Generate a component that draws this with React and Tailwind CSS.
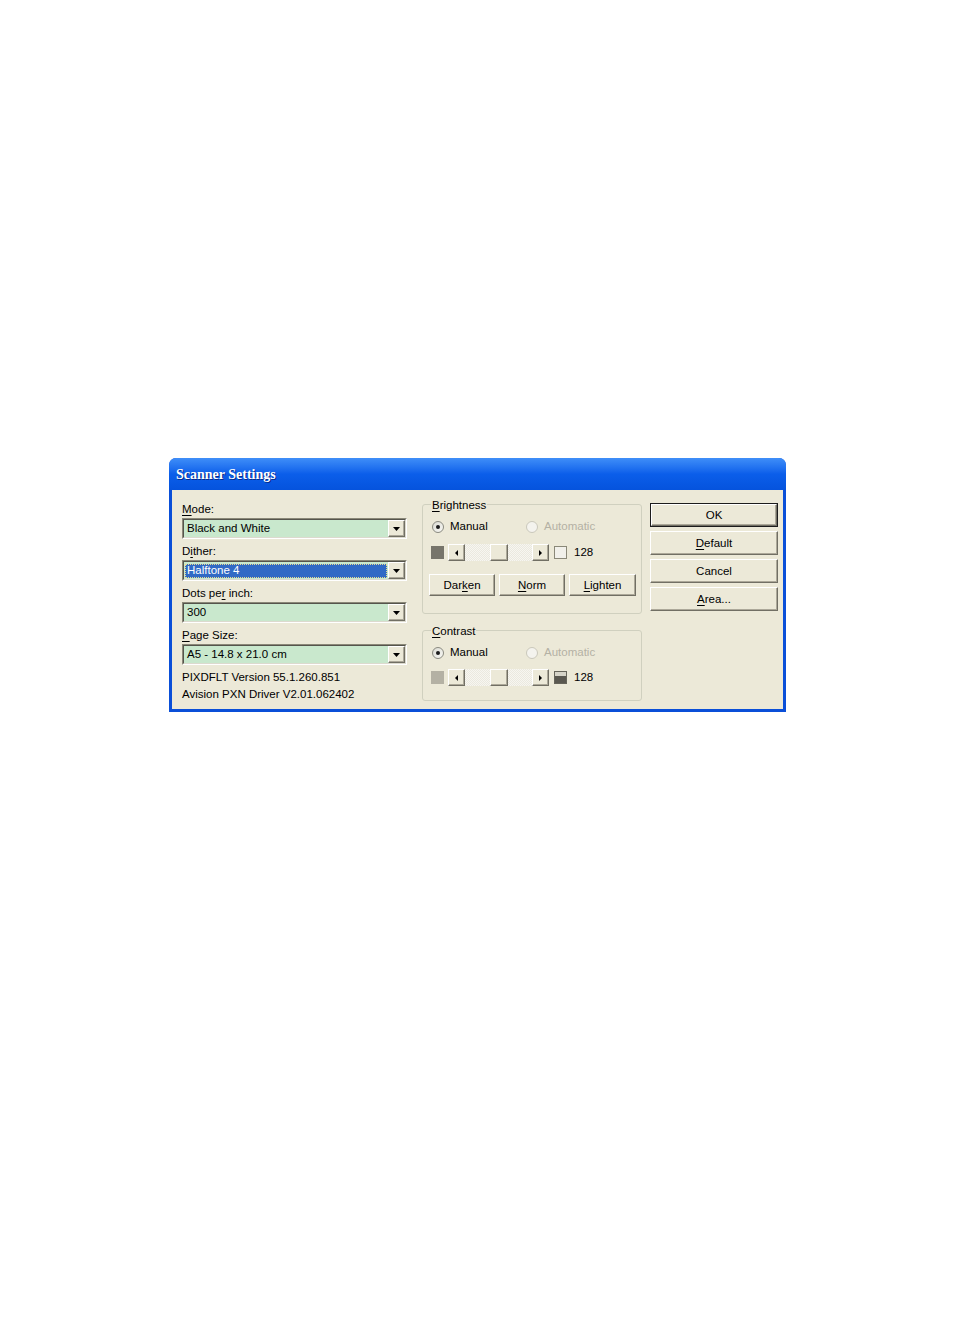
import React from 'react'

const raised =
  'border border-t-white border-l-white border-r-[#716f64] border-b-[#716f64] shadow-[inset_-1px_-1px_0_#aca899] bg-[#ece9d8]'

function U({ children }) {
  return <span className="underline underline-offset-[2px] decoration-1">{children}</span>
}

function Combo({ value, selected }) {
  return (
    <div className="mt-px flex h-[21px] border border-t-[#8a8878] border-l-[#8a8878] border-r-white border-b-white">
      <div className="flex flex-1 border border-t-[#55544c] border-l-[#55544c] border-r-[#dcdace] border-b-[#dcdace] bg-[#c9e8cd]">
        <div className="flex flex-1 items-center p-px pt-[2px]">
          {selected ? (
            <div className="flex h-full w-full items-center border border-dotted border-[#e8d890] bg-[#316ac5] pl-[1px] text-white">
              {value}
            </div>
          ) : (
            <span className="pl-[2px]">{value}</span>
          )}
        </div>
        <div className={`${raised} flex w-[17px] items-center justify-center`}>
          <svg width="7" height="4" viewBox="0 0 7 4">
            <path d="M0 0h7L3.5 4z" fill="#000" />
          </svg>
        </div>
      </div>
    </div>
  )
}

function Field({ label, value, selected }) {
  return (
    <div className="mb-[3px]">
      <div className="h-[17px] leading-[19px]">{label}</div>
      <Combo value={value} selected={selected} />
    </div>
  )
}

function Radio({ checked, disabled, label, className }) {
  return (
    <div className={`flex items-center ${className || ''}`}>
      <span
        className={`flex h-[12px] w-[12px] items-center justify-center rounded-full border ${
          disabled
            ? 'border-[#cac8bb] bg-[#f4f3ee]'
            : 'border-[#8a8a80] bg-gradient-to-br from-[#dcdcd4] to-[#f8f8f4]'
        }`}
      >
        {checked && <span className="h-[4px] w-[4px] rounded-full bg-[#1b1b1b]" />}
      </span>
      <span className={`ml-[6px] ${disabled ? 'text-[#b4b1a4]' : ''}`}>{label}</span>
    </div>
  )
}

function Arrow({ dir }) {
  return (
    <div className={`${raised} flex h-[17px] w-[17px] items-center justify-center`}>
      <svg width="3" height="6" viewBox="0 0 3 6">
        <path d={dir === 'left' ? 'M3 0v6L0 3z' : 'M0 0v6l3-3z'} fill="#000" />
      </svg>
    </div>
  )
}

function Slider({ leftColor, right }) {
  return (
    <div className="flex h-[17px] items-center pl-[8px]">
      <div className={`h-[13px] w-[13px] ${leftColor}`} />
      <div className="ml-[4px] flex h-[17px] w-[101px]">
        <Arrow dir="left" />
        <div className="flex flex-1 bg-[repeating-conic-gradient(#f7f6f1_0_25%,#ebe9df_0_50%)] bg-[length:2px_2px]">
          <div className="w-[25px]" />
          <div className={`${raised} h-[17px] w-[18px]`} />
        </div>
        <Arrow dir="right" />
      </div>
      <div className="ml-[5px]">{right}</div>
      <span className="ml-[7px] pt-px">128</span>
    </div>
  )
}

function Group({ label, children, className }) {
  return (
    <fieldset className={`rounded-[3px] border border-[#d0d0bf] px-0 ${className || ''}`}>
      <legend className="ml-[8px] h-[16px] px-[1px] leading-[18px]">{label}</legend>
      {children}
    </fieldset>
  )
}

function Btn({ children, w }) {
  return (
    <div className={`h-[22px] ${w}`}>
      <div className={`${raised} flex h-full items-center justify-center pt-px`}>{children}</div>
    </div>
  )
}

function SideBtn({ children, isDefault }) {
  return (
    <div className={`h-[24px] ${isDefault ? 'border border-[#1c1c1c]' : ''}`}>
      <div className={`${raised} flex h-full items-center justify-center pt-px`}>{children}</div>
    </div>
  )
}

export default function App() {
  return (
    <div className="min-h-[1336px] bg-white pl-[169px] pt-[458px] font-['Liberation_Sans',Arial,sans-serif] text-[11.5px] text-black">
      <div className="flex h-[254px] w-[617px] flex-col rounded-t-[7px] bg-[#0a4fd8]">
        <div className="flex h-[32px] items-center rounded-t-[7px] bg-gradient-to-b from-[#3f8ef8] via-[#0b5eea] to-[#0553dd] pl-[7px] pt-px">
          <span className="font-['Liberation_Serif',serif] text-[14px] font-bold text-white [text-shadow:1px_1px_0_#0a2c8a]">
            Scanner Settings
          </span>
        </div>
        <div className="mx-[3px] mb-[3px] flex flex-1 bg-[#ece9d8]">
          <div className="w-[235px] pl-[10px] pt-[10px]">
            <Field label={<><U>M</U>ode:</>} value="Black and White" />
            <Field label={<>D<U>i</U>ther:</>} value="Halftone 4" selected />
            <Field label={<>Dots pe<U>r</U> inch:</>} value="300" />
            <Field label={<><U>P</U>age Size:</>} value="A5 - 14.8 x 21.0 cm" />
            <div className="h-[17px] leading-[18px]">PIXDFLT Version 55.1.260.851</div>
            <div className="h-[17px] leading-[18px]">Avision PXN Driver V2.01.062402</div>
          </div>

          <div className="ml-[15px] w-[220px] pt-[6px]">
            <Group label={<><U>B</U>rightness</>} className="pb-[17px]">
              <div className="mt-[7px] flex h-[16px] items-center pl-[9px]">
                <Radio checked label="Manual" className="w-[94px]" />
                <Radio disabled label="Automatic" />
              </div>
              <div className="mt-[9px]">
                <Slider
                  leftColor="bg-[#77756b]"
                  right={<div className="h-[13px] w-[13px] border border-[#8a8878] bg-[#f1f0ea]" />}
                />
              </div>
              <div className="mt-[13px] flex gap-[4px] pl-[6px]">
                <Btn w="w-[66px]">Dar<U>k</U>en</Btn>
                <Btn w="w-[66px]"><U>N</U>orm</Btn>
                <Btn w="w-[67px]"><U>L</U>ighten</Btn>
              </div>
            </Group>

            <Group label={<><U>C</U>ontrast</>} className="mt-[8px] pb-[14px]">
              <div className="mt-[7px] flex h-[16px] items-center pl-[9px]">
                <Radio checked label="Manual" className="w-[94px]" />
                <Radio disabled label="Automatic" />
              </div>
              <div className="mt-[8px]">
                <Slider
                  leftColor="bg-[#b4b1a4]"
                  right={
                    <div className="flex h-[13px] w-[13px] flex-col border border-[#66645a]">
                      <div className="h-[4px] bg-[#d6d4c8]" />
                      <div className="flex-1 bg-[#5a5850]" />
                    </div>
                  }
                />
              </div>
            </Group>
          </div>

          <div className="ml-[8px] flex w-[128px] flex-col gap-[4px] pt-[13px]">
            <SideBtn isDefault>OK</SideBtn>
            <SideBtn><U>D</U>efault</SideBtn>
            <SideBtn>Cancel</SideBtn>
            <SideBtn><U>A</U>rea...</SideBtn>
          </div>
        </div>
      </div>
    </div>
  )
}
